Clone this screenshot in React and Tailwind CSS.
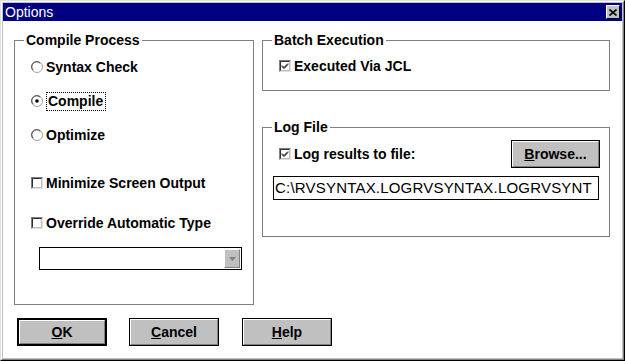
import React from 'react';

const font = "font-['Liberation_Sans',Arial,sans-serif]";

function Radio({ checked }) {
  return (
    <svg width="12" height="12" viewBox="0 0 12 12" className="shrink-0">
      <circle cx="6" cy="6" r="5.5" fill="white" stroke="#a0a0a0" />
      <path d="M2.2 9.2 A4.3 4.3 0 0 1 9.2 2.2" fill="none" stroke="#404040" />
      {checked && <circle cx="6" cy="6" r="1.8" fill="black" />}
    </svg>
  );
}

function Check({ checked }) {
  return (
    <span className="shrink-0 w-[12px] h-[12px] border border-t-[#808080] border-l-[#808080] border-b-[#dfdfdf] border-r-[#dfdfdf] flex">
      <span className="w-full h-full bg-white border border-t-[#303030] border-l-[#303030] border-b-[#c0c0c0] border-r-[#c0c0c0] flex items-center justify-center">
        {checked && (
          <svg width="8" height="8" viewBox="0 0 8 8">
            <path d="M1 3.5 L3 5.5 L7 1.5 M1 4.5 L3 6.5 L7 2.5" fill="none" stroke="black" strokeWidth="1" />
          </svg>
        )}
      </span>
    </span>
  );
}

function Button({ children, def, className = '' }) {
  return (
    <div
      className={`border-black bg-[#c0c0c0] ${def ? 'border-2' : 'border'} ${className}`}
    >
      <div className="w-full h-full border border-t-white border-l-white border-b-[#808080] border-r-[#808080] flex items-center justify-center">
        <span className="text-[14px] leading-[16px] font-bold text-black">{children}</span>
      </div>
    </div>
  );
}

function Group({ label, className = '', children }) {
  return (
    <fieldset className={`border border-[#808080] ${className}`}>
      <legend className="ml-[9px] px-[2px] text-[14px] leading-[16px] font-bold text-black">{label}</legend>
      {children}
    </fieldset>
  );
}

export default function App() {
  return (
    <div className={`${font} w-[625px] h-[361px] border border-t-[#dfdfdf] border-l-[#dfdfdf] border-r-black border-b-black bg-[#c0c0c0]`}>
      <div className="w-full h-full border border-t-white border-l-white border-r-[#808080] border-b-[#808080] p-px flex flex-col">
        {/* title bar */}
        <div className="h-[18px] bg-[#000080] flex items-center justify-between pl-[2px] pr-[2px] shrink-0">
          <span className="text-white text-[14px] leading-[16px]">Options</span>
          <div className="w-[14px] h-[14px] bg-[#c0c0c0] border border-t-white border-l-white border-r-black border-b-black flex items-center justify-center">
            <svg width="8" height="7" viewBox="0 0 8 7">
              <path d="M0.5 0.5 L7.5 6.5 M7.5 0.5 L0.5 6.5" stroke="black" strokeWidth="1.6" />
            </svg>
          </div>
        </div>

        <div className="flex-1 bg-white pl-[11px] pt-[11px] flex flex-col">
          <div className="flex gap-[8px]">
            {/* left column */}
            <Group label="Compile Process" className="w-[240px] h-[273px]">
              <div className="flex flex-col pl-[16px] pt-[11px] font-bold text-[14px] leading-[16px] text-black">
                <div className="h-[16px] flex items-center gap-[3px]">
                  <Radio />
                  <span>Syntax Check</span>
                </div>
                <div className="h-[16px] flex items-center gap-[3px] mt-[18px]">
                  <Radio checked />
                  <span className="border border-dotted border-black pl-[1px] pr-[2px] py-px leading-[15px]">Compile</span>
                </div>
                <div className="h-[16px] flex items-center gap-[3px] mt-[18px]">
                  <Radio />
                  <span>Optimize</span>
                </div>
                <div className="h-[16px] flex items-center gap-[3px] mt-[32px]">
                  <Check />
                  <span>Minimize Screen Output</span>
                </div>
                <div className="h-[16px] flex items-center gap-[3px] mt-[24px]">
                  <Check />
                  <span>Override Automatic Type</span>
                </div>
                <div className="ml-[8px] mt-[16px] w-[203px] h-[23px] border border-black bg-white flex justify-end items-center pr-px">
                  <div className="w-[16px] h-[19px] bg-[#c0c0c0] border border-t-white border-l-white border-b-[#808080] border-r-[#808080] flex items-center justify-center">
                    <svg width="7" height="4" viewBox="0 0 7 4">
                      <path d="M0 0 H7 L3.5 4 Z" fill="#808080" />
                    </svg>
                  </div>
                </div>
              </div>
            </Group>

            {/* right column */}
            <div className="flex flex-col">
              <Group label="Batch Execution" className="w-[348px] h-[59px]">
                <div className="pl-[16px] pt-[10px] h-[16px] box-content flex items-center gap-[3px] font-bold text-[14px] leading-[16px]">
                  <Check checked />
                  <span>Executed Via JCL</span>
                </div>
              </Group>

              <Group label="Log File" className="w-[348px] h-[118px] mt-[28px]">
                <div className="flex flex-col">
                  <div className="mt-[5px] h-[28px] flex items-center justify-between pl-[16px] pr-[9px]">
                    <div className="flex items-center gap-[3px] font-bold text-[14px] leading-[16px]">
                      <Check checked />
                      <span>Log results to file:</span>
                    </div>
                    <Button className="w-[89px] h-[28px]">
                      <span className="underline">B</span>rowse...
                    </Button>
                  </div>
                  <div className="ml-[10px] mt-[8px] w-[326px] h-[24px] border border-black flex items-center pl-px">
                    <span className="text-[15px] leading-[18px] tracking-[0.2px] text-black whitespace-nowrap">C:\RVSYNTAX.LOGRVSYNTAX.LOGRVSYNT</span>
                  </div>
                </div>
              </Group>
            </div>
          </div>

          {/* buttons */}
          <div className="flex gap-[22px] ml-[3px] mt-[13px]">
            <Button def className="w-[90px] h-[28px]">
              <span className="underline">O</span>K
            </Button>
            <Button className="w-[90px] h-[28px]">
              <span className="underline">C</span>ancel
            </Button>
            <Button className="w-[90px] h-[28px] ml-px">
              <span className="underline">H</span>elp
            </Button>
          </div>
        </div>
      </div>
    </div>
  );
}
